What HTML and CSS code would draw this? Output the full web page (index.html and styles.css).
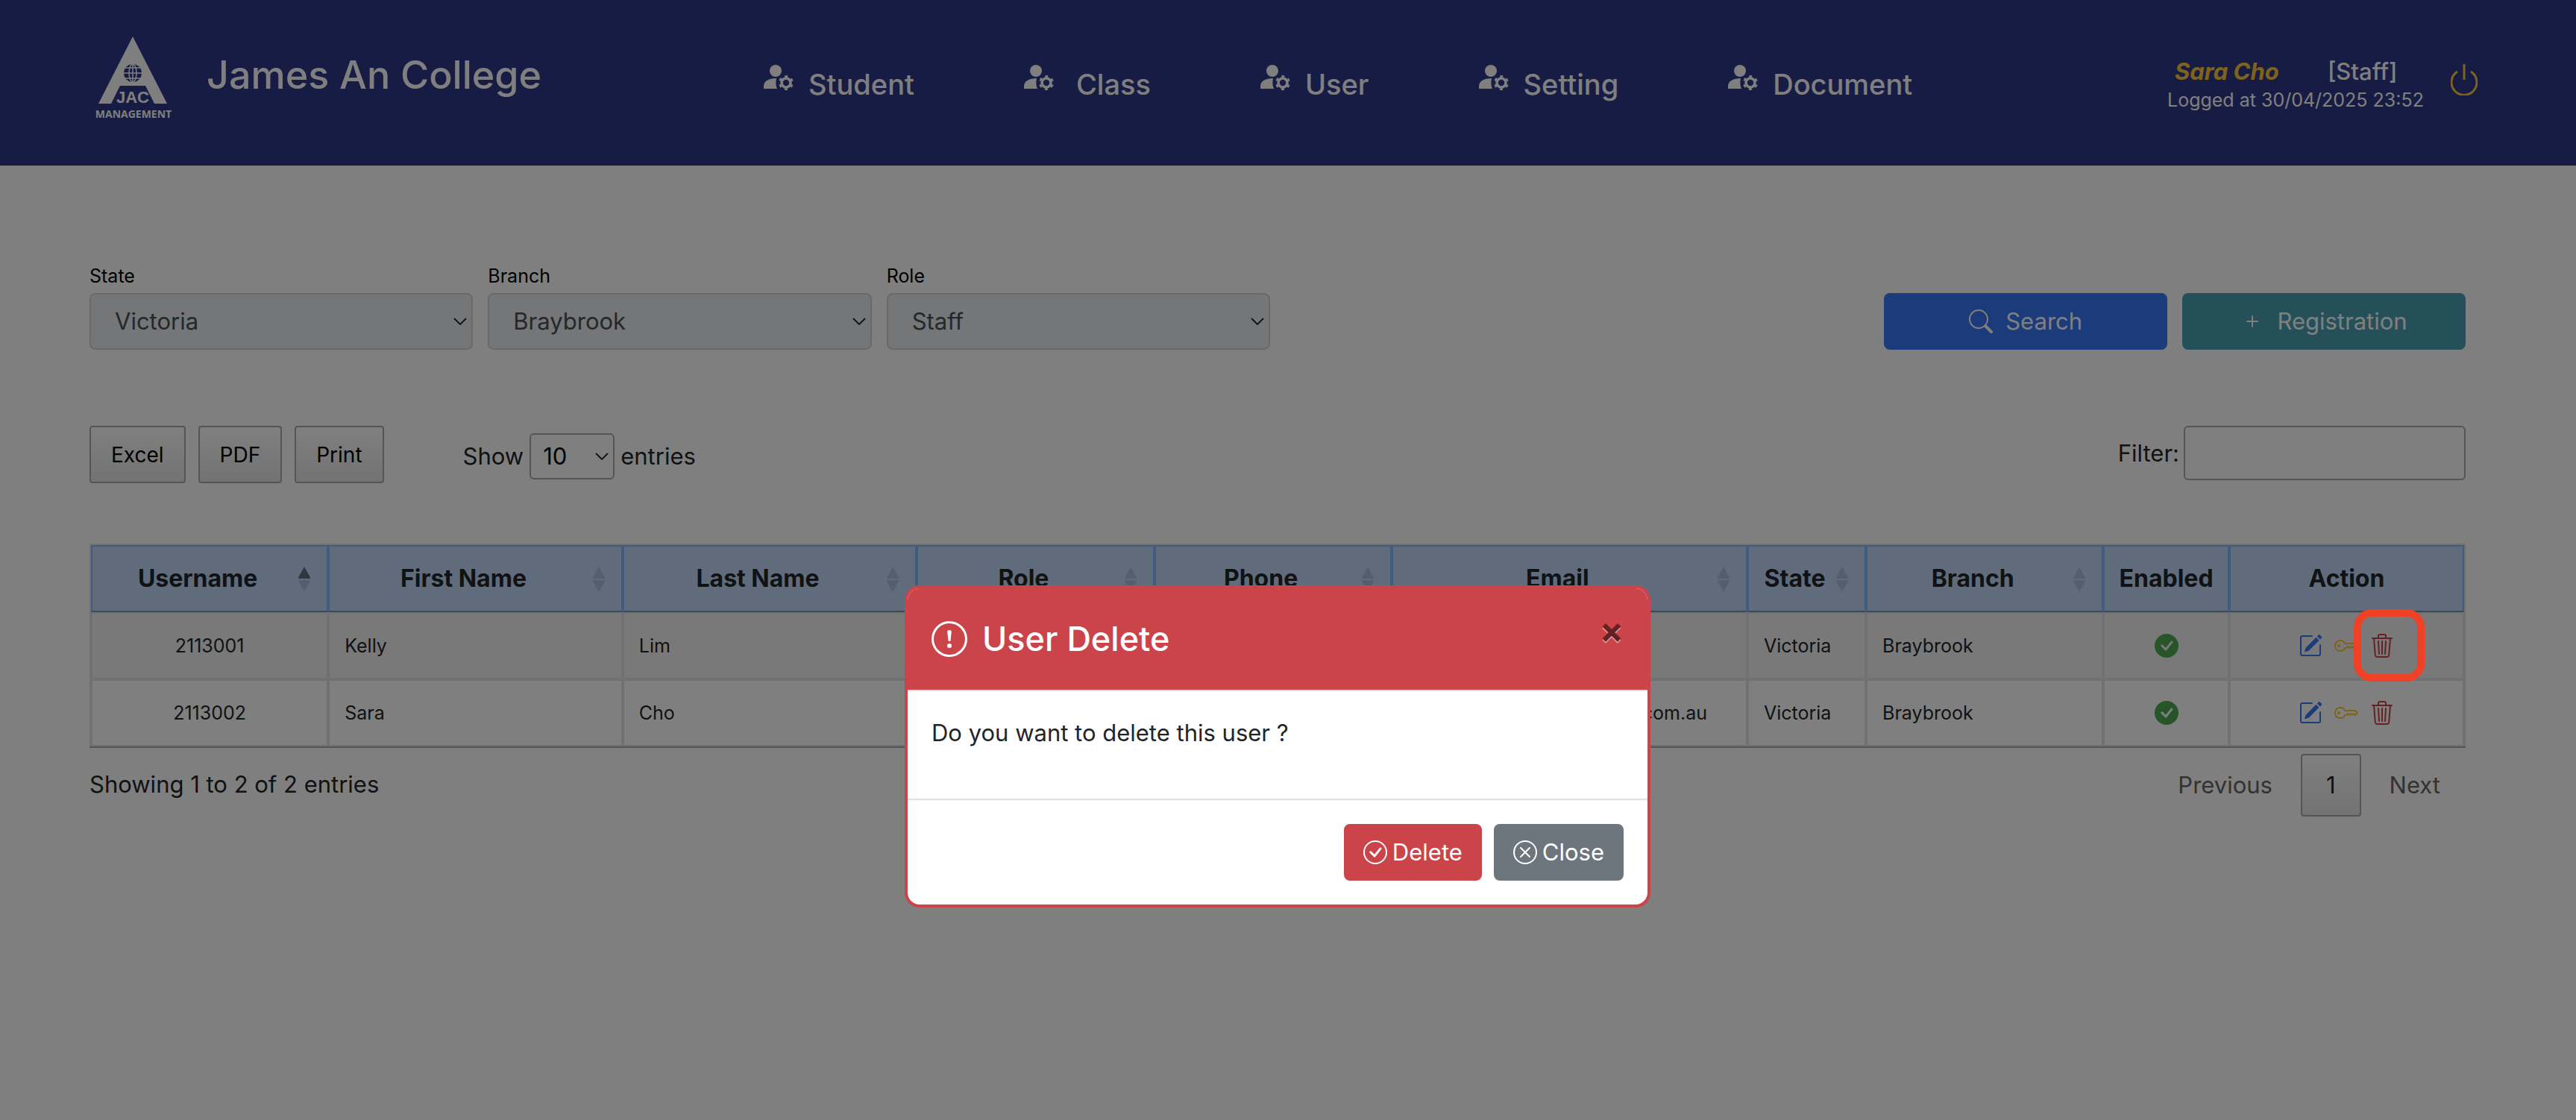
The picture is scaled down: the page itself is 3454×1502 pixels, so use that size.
FILE: index.html
```
<!DOCTYPE html>
<html lang="en">
<head>
<meta charset="utf-8">
<title>James An College</title>
<link rel="stylesheet" href="styles.css">
</head>
<body>
<svg class="defs" aria-hidden="true">
  <symbol id="user-gear" viewBox="0 0 40 34"><circle cx="16" cy="8" r="8"/><path d="M0 32v-3C0 22 6 18 17 18c-1 5-1 10 1 14z"/><circle cx="30" cy="24" r="6" fill="none" stroke="currentColor" stroke-width="3.600"/><circle cx="30" cy="24" r="8.300" fill="none" stroke="currentColor" stroke-width="3.400" stroke-dasharray="3.800 4.890" stroke-dashoffset="-2.450"/></symbol>
  <symbol id="check-fill" viewBox="0 0 16 16"><path d="M16 8A8 8 0 1 1 0 8a8 8 0 0 1 16 0zm-3.970-3.030a.75.75 0 0 0-1.080.022L7.477 9.417 5.384 7.323a.75.75 0 0 0-1.060 1.060L6.970 11.030a.75.75 0 0 0 1.079-.02l3.992-4.990a.75.75 0 0 0-.01-1.050z"/></symbol>
  <symbol id="edit" viewBox="0 0 16 16"><path d="M15.502 1.940a.5.5 0 0 1 0 .706L14.459 3.690l-2-2L13.502.646a.5.5 0 0 1 .707 0l1.293 1.293zm-1.750 2.456-2-2L4.939 9.210a.5.5 0 0 0-.121.196l-.805 2.414a.25.25 0 0 0 .316.316l2.414-.805a.5.5 0 0 0 .196-.12l6.813-6.814z"/><path fill-rule="evenodd" d="M1 13.500A1.500 1.500 0 0 0 2.500 15h11a1.500 1.500 0 0 0 1.500-1.500v-6a.5.5 0 0 0-1 0v6a.5.5 0 0 1-.5.5h-11a.5.5 0 0 1-.5-.5v-11a.5.5 0 0 1 .5-.5H9a.5.5 0 0 0 0-1H2.500A1.500 1.500 0 0 0 1 2.500v11z"/></symbol>
  <symbol id="key" viewBox="0 0 16 16"><path d="M0 8a4 4 0 0 1 7.465-2H14a.5.5 0 0 1 .354.146l1.500 1.500a.5.5 0 0 1 0 .708l-1.500 1.500a.5.5 0 0 1-.708 0L13 9.207l-.646.647a.5.5 0 0 1-.708 0L11 9.207l-.646.647a.5.5 0 0 1-.708 0L9 9.207l-.646.647A.5.5 0 0 1 8 10h-.535A4 4 0 0 1 0 8zm4-3a3 3 0 1 0 2.712 4.285A.5.5 0 0 1 7.163 9h.63l.853-.854a.5.5 0 0 1 .708 0l.646.647.646-.647a.5.5 0 0 1 .708 0l.646.647.646-.647a.5.5 0 0 1 .708 0l.646.647.793-.793-1-1h-6.630a.5.5 0 0 1-.451-.285A3 3 0 0 0 4 5z"/><path d="M4 8a1 1 0 1 1-2 0 1 1 0 0 1 2 0z"/></symbol>
  <symbol id="trash" viewBox="0 0 16 16"><path d="M6.500 1h3a.5.5 0 0 1 .5.5v1H6v-1a.5.5 0 0 1 .5-.5ZM11 2.500v-1A1.500 1.500 0 0 0 9.500 0h-3A1.500 1.500 0 0 0 5 1.500v1H2.506a.58.58 0 0 0-.01 0H1.500a.5.5 0 0 0 0 1h.538l.853 10.660A2 2 0 0 0 4.885 16h6.230a2 2 0 0 0 1.994-1.840l.853-10.660h.538a.5.5 0 0 0 0-1h-.995a.59.59 0 0 0-.01 0H11Zm1.958 1-.846 10.580a1 1 0 0 1-.997.920h-6.230a1 1 0 0 1-.997-.920L3.042 3.500h9.916Zm-7.487 1a.5.5 0 0 1 .528.470l.5 8.500a.5.5 0 0 1-.998.060L5 5.030a.5.5 0 0 1 .470-.530Zm5.058 0a.5.5 0 0 1 .470.530l-.5 8.500a.5.5 0 1 1-.998-.060l.5-8.500a.5.5 0 0 1 .528-.470ZM8 4.500a.5.5 0 0 1 .5.5v8.500a.5.5 0 0 1-1 0V5a.5.5 0 0 1 .5-.5Z"/></symbol>
  <symbol id="sort" viewBox="0 0 16 34"><path class="up" d="M8 0l8 14.500a1 1 0 0 1-1 1.500H1a1 1 0 0 1-1-1.500z"/><path class="down" d="M8 34L0 19.500A1 1 0 0 1 1 18h14a1 1 0 0 1 1 1.500z"/></symbol>
</svg>

<header class="topbar">
  <a class="brand" href="#">
    <svg class="logo" viewBox="0 0 106 114" role="img" aria-label="JAC Management">
      <path d="M52 0L98 90H81L69 66H35L23 90H6z"/>
      <circle class="globe" cx="52" cy="49" r="12"/>
      <g class="grid"><ellipse cx="52" cy="49" rx="5" ry="12"/><path d="M52 37v24M40 49h24M42 42h20M42 56h20"/></g>
      <text class="jac" x="52" y="89">JAC</text>
      <text class="mgmt" x="53" y="109">MANAGEMENT</text>
    </svg>
    <span class="brand-name">James An College</span>
  </a>
  <nav class="menu">
    <a href="#"><svg><use href="#user-gear"/></svg>Student</a>
    <a class="wide" href="#"><svg><use href="#user-gear"/></svg>Class</a>
    <a href="#"><svg><use href="#user-gear"/></svg>User</a>
    <a href="#"><svg><use href="#user-gear"/></svg>Setting</a>
    <a href="#"><svg><use href="#user-gear"/></svg>Document</a>
  </nav>
  <div class="account">
    <div>
      <p class="who"><em>Sara Cho</em><span>[Staff]</span></p>
      <p class="logged">Logged at 30/04/2025 23:52</p>
    </div>
    <a href="#" aria-label="Log out"><svg class="power" viewBox="0 0 36 42"><path d="M9 10a17 17 0 1 0 18 0M18 0v21"/></svg></a>
  </div>
</header>

<main class="page">
  <form class="filters">
    <div class="field"><label for="state">State</label><select id="state" disabled><option>Victoria</option></select></div>
    <div class="field"><label for="branch">Branch</label><select id="branch" disabled><option>Braybrook</option></select></div>
    <div class="field"><label for="role">Role</label><select id="role" disabled><option>Staff</option></select></div>
    <div class="actions">
      <button class="btn search" type="button"><svg viewBox="0 0 16 16"><path d="M11.742 10.344a6.500 6.500 0 1 0-1.397 1.398h-.001c.03.04.062.078.098.115l3.850 3.850a1 1 0 0 0 1.415-1.414l-3.850-3.850a1.007 1.007 0 0 0-.115-.1zM12 6.500a5.500 5.500 0 1 1-11 0 5.500 5.500 0 0 1 11 0z"/></svg>Search</button>
      <button class="btn register" type="button"><svg viewBox="0 0 16 16"><path d="M8 4a.5.5 0 0 1 .5.5v3h3a.5.5 0 0 1 0 1h-3v3a.5.5 0 0 1-1 0v-3h-3a.5.5 0 0 1 0-1h3v-3A.5.5 0 0 1 8 4z"/></svg>Registration</button>
    </div>
  </form>

  <div class="tools">
    <div class="exports"><button type="button">Excel</button><button type="button">PDF</button><button type="button">Print</button></div>
    <label class="length">Show <select><option>10</option></select> entries</label>
    <label class="filter">Filter:<input type="search"></label>
  </div>

  <table class="users">
    <colgroup><col class="c-m"><col class="c-l"><col class="c-l"><col class="c-m"><col class="c-m"><col class="c-xl"><col class="c-s"><col class="c-m"><col class="c-e"><col></colgroup>
    <thead>
      <tr>
        <th class="sortable asc">Username<svg><use href="#sort"/></svg></th>
        <th class="sortable">First Name<svg><use href="#sort"/></svg></th>
        <th class="sortable">Last Name<svg><use href="#sort"/></svg></th>
        <th class="sortable">Role<svg><use href="#sort"/></svg></th>
        <th class="sortable">Phone<svg><use href="#sort"/></svg></th>
        <th class="sortable">Email<svg><use href="#sort"/></svg></th>
        <th class="sortable">State<svg><use href="#sort"/></svg></th>
        <th class="sortable">Branch<svg><use href="#sort"/></svg></th>
        <th>Enabled</th>
        <th>Action</th>
      </tr>
    </thead>
    <tbody>
      <tr>
        <td class="mid">2113001</td><td>Kelly</td><td>Lim</td><td></td><td></td><td></td><td>Victoria</td><td>Braybrook</td>
        <td class="mid"><svg class="ok"><use href="#check-fill"/></svg></td>
        <td><div class="ops"><a class="edit" href="#" aria-label="Edit"><svg><use href="#edit"/></svg></a><a class="key" href="#" aria-label="Password"><svg><use href="#key"/></svg></a><a class="trash marked" href="#" aria-label="Delete"><svg><use href="#trash"/></svg></a></div></td>
      </tr>
      <tr>
        <td class="mid">2113002</td><td>Sara</td><td>Cho</td><td></td><td></td><td class="email">.com.au</td><td>Victoria</td><td>Braybrook</td>
        <td class="mid"><svg class="ok"><use href="#check-fill"/></svg></td>
        <td><div class="ops"><a class="edit" href="#" aria-label="Edit"><svg><use href="#edit"/></svg></a><a class="key" href="#" aria-label="Password"><svg><use href="#key"/></svg></a><a class="trash" href="#" aria-label="Delete"><svg><use href="#trash"/></svg></a></div></td>
      </tr>
    </tbody>
  </table>

  <div class="foot">
    <p>Showing 1 to 2 of 2 entries</p>
    <div class="pager"><button type="button" disabled>Previous</button><button class="current" type="button">1</button><button type="button" disabled>Next</button></div>
  </div>
</main>

<div class="backdrop">
  <section class="modal" role="dialog" aria-labelledby="dlg-title">
    <header>
      <h2 id="dlg-title"><svg viewBox="0 0 16 16"><path d="M8 15A7 7 0 1 1 8 1a7 7 0 0 1 0 14zm0 1A8 8 0 1 0 8 0a8 8 0 0 0 0 16z"/><path d="M7.002 11a1 1 0 1 1 2 0 1 1 0 0 1-2 0zM7.100 4.995a.905.905 0 1 1 1.800 0l-.350 3.507a.552.552 0 0 1-1.100 0L7.100 4.995z"/></svg>User Delete</h2>
      <button class="x" type="button" aria-label="Dismiss">×</button>
    </header>
    <p class="question">Do you want to delete this user ?</p>
    <footer>
      <button class="btn danger" type="button"><svg viewBox="0 0 16 16"><path d="M8 15A7 7 0 1 1 8 1a7 7 0 0 1 0 14zm0 1A8 8 0 1 0 8 0a8 8 0 0 0 0 16z"/><path d="M10.970 4.970a.235.235 0 0 0-.02.022L7.477 9.417 5.384 7.323a.75.75 0 0 0-1.060 1.060L6.970 11.030a.75.75 0 0 0 1.079-.02l3.992-4.990a.75.75 0 0 0-1.071-1.050z"/></svg>Delete</button>
      <button class="btn neutral" type="button"><svg viewBox="0 0 16 16"><path d="M8 15A7 7 0 1 1 8 1a7 7 0 0 1 0 14zm0 1A8 8 0 1 0 8 0a8 8 0 0 0 0 16z"/><path d="M4.646 4.646a.5.5 0 0 1 .708 0L8 7.293l2.646-2.647a.5.5 0 0 1 .708.708L8.707 8l2.647 2.646a.5.5 0 0 1-.708.708L8 8.707l-2.646 2.647a.5.5 0 0 1-.708-.708L7.293 8 4.646 5.354a.5.5 0 0 1 0-.708z"/></svg>Close</button>
    </footer>
  </section>
</div>
</body>
</html>
```

FILE: styles.css
```
* { box-sizing: border-box; }

body {
  margin: 0;
  min-height: 100vh;
  background: #fff;
  color: #212529;
  font: 400 31px/48px Inter, "Liberation Sans", sans-serif;
}

p, h2 { margin: 0; }
a { color: inherit; text-decoration: none; }
svg { fill: currentColor; flex: none; display: block; }
button, select, input { font: inherit; color: inherit; margin: 0; }
.defs { position: absolute; width: 0; height: 0; }

/* Top bar */
.topbar {
  display: grid;
  grid-template-columns: 1024fr 1882fr 548fr;
  height: 222px;
  background: #2f3888;
  color: #fff;
}
.brand { display: flex; align-items: flex-start; gap: 45px; padding: 49px 0 0 126px; }
.logo { width: 106px; height: 114px; overflow: visible; }
.logo .globe { fill: #2f3888; }
.logo .grid { fill: none; stroke: #fff; stroke-width: 1.5; }
.logo text { text-anchor: middle; font-family: "Open Sans", sans-serif; font-weight: 700; }
.logo .jac { font-family: "Liberation Sans", sans-serif; font-size: 22px; }
.logo .mgmt { font-size: 14px; }
.brand-name { padding-top: 20px; font-size: 52px; line-height: 64px; font-weight: 500; white-space: nowrap; }
.menu { display: flex; align-items: flex-start; gap: 147px; padding-top: 87px; }
.menu a { display: flex; gap: 20px; font-size: 38px; line-height: 52px; font-weight: 500; }
.menu a.wide { gap: 30px; }
.menu svg { width: 40px; height: 34px; }
.account { display: flex; align-items: flex-start; gap: 36px; padding-top: 76px; white-space: nowrap; }
.who { display: flex; gap: 65px; padding-left: 10px; font-weight: 500; line-height: 40px; }
.who em { color: #fbc639; font-weight: 700; }
.logged { font-size: 25px; line-height: 36px; }
.power { width: 36px; height: 42px; margin-top: 10px; fill: none; stroke: #fbc639; stroke-width: 3; }

/* Page */
.page { padding: 132px 148px 0 120px; }
.filters { display: grid; grid-template-columns: repeat(12, 1fr); gap: 20px; align-items: end; }
.field { grid-column: span 2; display: flex; flex-direction: column; font-size: 25px; color: #000; }
.field label { line-height: 32px; padding-bottom: 7px; }
select {
  appearance: none;
  background: url("data:image/svg+xml,%3Csvg xmlns='http://www.w3.org/2000/svg' viewBox='0 0 20 12'%3E%3Cpath d='M2 2l8 8 8-8' fill='none' stroke='%23222' stroke-width='1.800'/%3E%3C/svg%3E") no-repeat right 5px center / 20px 12px;
}
.field select {
  height: 76px;
  padding: 0 32px;
  border: 2px solid #ced4da;
  border-radius: 8px;
  background-color: #e9ecef;
  color: #495057;
  font-size: 31px;
  opacity: 1;
}
.actions { grid-column: span 6; display: flex; justify-content: flex-end; gap: 20px; }
.btn {
  display: flex; align-items: center; justify-content: center;
  height: 76px; border: 0; border-radius: 8px; color: #fff;
}
.btn svg { width: 32px; height: 32px; }
.actions .btn { width: 24%; gap: 17px; }
.actions .search { background: #3677f4; }
.actions .register { background: #4ba1b4; }

.tools { display: flex; align-items: flex-start; padding-top: 102px; }
.exports { display: flex; gap: 17px; }
.exports button {
  height: 77px; padding: 0 27px;
  border: 2px solid #aaa; border-radius: 4px;
  background: linear-gradient(#fff, #e6e6e6);
  color: #000; font-size: 28px;
}
.length { display: flex; align-items: center; gap: 8px; padding: 10px 0 0 106px; }
.length select { width: 114px; height: 62px; padding: 0 16px; border: 2px solid #aaa; border-radius: 6px; color: #000; }
.filter { display: flex; align-items: center; gap: 6px; margin-left: auto; }
.filter input { width: 378px; height: 73px; border: 2px solid #aaa; border-radius: 6px; background: transparent; }

/* Users table */
.users {
  width: 100%; margin-top: 81px; table-layout: fixed;
  border: 2px solid #dee2e6; border-bottom: 0;
  border-collapse: separate; border-spacing: 0;
  box-shadow: 0 2px #aaa;
}
.c-s { width: 5%; }
.c-e { width: 5.3%; }
.c-m { width: 10%; }
.c-l { width: 12.4%; }
.c-xl { width: 15%; }
.users th {
  position: relative; height: 90px; padding: 0 18px;
  border: 2px solid #84b8fb; border-bottom-color: #80919f;
  background: #c0d8f8; font-size: 32px; white-space: nowrap;
}
.users th.sortable { padding: 0 52px 0 20px; }
.users th svg { position: absolute; right: 22px; top: 27px; width: 16px; height: 34px; fill: #a9bdd8; }
.users .asc svg { color: #5f6e80; }
.users td {
  height: 90px; padding: 0 20px;
  border: 2px solid #dee2e6;
  font-size: 25px; white-space: nowrap;
}
.users tbody tr:first-child { background: #f2f2f2; }
.users .mid { text-align: center; }
.users .email { padding-right: 52px; text-align: right; }
.up { fill: currentColor; }
.users th:not(.asc) svg { color: #a9bdd8; }
.ok { width: 32px; height: 32px; margin: 0 auto; color: #4faa50; }
.ops { display: flex; justify-content: center; gap: 16px; }
.ops svg { width: 32px; height: 32px; }
.edit { color: #3677f4; }
.key { color: #fbc639; }
.trash { color: #cb444a; }
.marked { position: relative; }
.marked::after {
  content: ""; position: absolute; z-index: 2; inset: -33px -41px -32px -22px;
  border: 10px solid #ee4126; border-radius: 24px;
}

.foot { display: flex; justify-content: space-between; padding-top: 10px; }
.foot p { padding-top: 17px; }
.pager { display: flex; gap: 4px; }
.pager button { height: 84px; padding: 0 32px; border: 2px solid transparent; border-radius: 4px; background: none; color: #666; }
.pager .current { border-color: #aaa; background: linear-gradient(#fff, #e6e6e6); color: #222; }

/* Dialog */
.backdrop {
  position: fixed; inset: 0; z-index: 1;
  display: flex; justify-content: center; align-items: center;
  padding: 500px 28px 0 0;
  background: rgba(0, 0, 0, .5);
}
.modal { width: 1000px; border: 4px solid #cb444a; border-radius: 20px; background: #fff; overflow: hidden; }
.modal header { display: flex; justify-content: space-between; padding: 32px; height: 138px; background: #cb444a; border-bottom: 2px solid #dee2e6; color: #fff; }
.modal h2 { display: flex; align-items: center; gap: 20px; font-size: 45px; line-height: 72px; font-weight: 500; }
.modal h2 svg { width: 48px; height: 48px; }
.x { padding: 0; align-self: flex-start; border: 0; background: none; color: #000; font-size: 48px; line-height: 48px; font-weight: 700; text-shadow: 0 2px 0 #fff; opacity: .5; }
.question { padding: 32px 32px 64px; }
.modal footer { display: flex; justify-content: flex-end; gap: 16px; padding: 32px; border-top: 2px solid #dee2e6; }
.modal .btn { padding: 0 26px; gap: 7px; }
.danger { background: #cb444a; }
.neutral { background: #6d757d; }
```
